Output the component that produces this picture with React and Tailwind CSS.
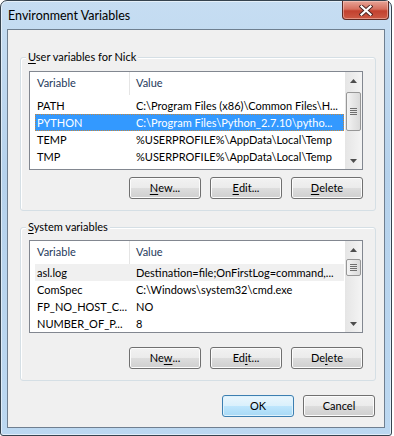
import React from 'react';

const userVars = [
  { name: 'PATH', value: 'C:\\Program Files (x86)\\Common Files\\H...' },
  { name: 'PYTHON', value: 'C:\\Program Files\\Python_2.7.10\\pytho...', selected: true },
  { name: 'TEMP', value: '%USERPROFILE%\\AppData\\Local\\Temp' },
  { name: 'TMP', value: '%USERPROFILE%\\AppData\\Local\\Temp' },
];

const systemVars = [
  { name: 'asl.log', value: 'Destination=file;OnFirstLog=command,...', inactive: true },
  { name: 'ComSpec', value: 'C:\\Windows\\system32\\cmd.exe' },
  { name: 'FP_NO_HOST_C...', value: 'NO' },
  { name: 'NUMBER_OF_P...', value: '8' },
];

const UpArrow = () => (
  <svg width="7" height="4" viewBox="0 0 7 4">
    <polygon points="0,4 3.5,0 7,4" fill="#4d4d4d" />
  </svg>
);

const DownArrow = () => (
  <svg width="7" height="4" viewBox="0 0 7 4">
    <polygon points="0,0 7,0 3.5,4" fill="#4d4d4d" />
  </svg>
);

const ScrollBar = ({ thumbClass }) => (
  <div className="flex w-[17px] flex-col bg-[linear-gradient(to_right,#e5e5e5,#f4f4f4)]">
    <div className="flex h-[17px] items-center justify-center">
      <UpArrow />
    </div>
    <div className="flex-1">
      <div className={thumbClass}>
        <div className="flex flex-col gap-[1px]">
          <div className="h-[1px] w-[7px] bg-[#6f6f6f]" />
          <div className="h-[1px] w-[7px] bg-[#6f6f6f]" />
          <div className="h-[1px] w-[7px] bg-[#6f6f6f]" />
          <div className="h-[1px] w-[7px] bg-[#6f6f6f]" />
        </div>
      </div>
    </div>
    <div className="flex h-[17px] items-center justify-center">
      <DownArrow />
    </div>
  </div>
);

const Row = ({ item }) => {
  let cls = 'ml-[5px] flex h-[17px] w-[309px] items-center whitespace-nowrap leading-[17px] text-black';
  if (item.selected) cls = 'ml-[5px] flex h-[17px] w-[309px] items-center whitespace-nowrap leading-[17px] bg-[#3399ff] text-white outline outline-1 outline-dotted outline-offset-[-1px] outline-[#c8873a]';
  if (item.inactive) cls = 'ml-[5px] flex h-[17px] w-[309px] items-center whitespace-nowrap leading-[17px] bg-[#f0f0f0] text-black';
  return (
    <div className={cls}>
      <div className="w-[99px] overflow-hidden pl-[2px]">{item.name}</div>
      <div className="flex-1 overflow-hidden pl-[2px]">{item.value}</div>
    </div>
  );
};

const ListView = ({ rows, heightClass, rowsClass, thumbClass }) => (
  <div className={heightClass}>
    <div className="flex min-w-0 flex-1 flex-col overflow-hidden bg-white">
      <div className="flex h-[23px] shrink-0 items-center text-[#1e395b]">
        <div className="flex h-full w-[100px] items-center border-r border-[#e5e5e5] pl-[7px]">Variable</div>
        <div className="pl-[6px]">Value</div>
      </div>
      <div className={rowsClass}>
        {rows.map((r) => (
          <Row key={r.name} item={r} />
        ))}
      </div>
    </div>
    <ScrollBar thumbClass={thumbClass} />
  </div>
);

const Btn = ({ children, primary }) => (
  <button
    type="button"
    className={
      primary
        ? 'flex h-[22px] w-[72px] items-center justify-center rounded-[3px] border border-[#3c7fb1] bg-[linear-gradient(to_bottom,#eaf6fd_0%,#d9f0fc_50%,#bee6fd_50%,#a7d9f5_100%)] text-black shadow-[inset_0_0_0_1px_#dff2fc]'
        : 'flex h-[22px] w-[72px] items-center justify-center rounded-[3px] border border-[#707070] bg-[linear-gradient(to_bottom,#f2f2f2_0%,#ebebeb_50%,#dddddd_50%,#cfcfcf_100%)] text-black shadow-[inset_0_0_0_1px_#fcfcfc]'
    }
  >
    {children}
  </button>
);

const U = ({ children }) => <span className="underline underline-offset-[2px]">{children}</span>;

const GroupBox = ({ label, children, className }) => (
  <div className={className}>
    <div className="absolute left-[5px] top-[-8px] bg-[#f0f0f0] px-[2px] leading-[14px] text-black">{label}</div>
    {children}
  </div>
);

export default function App() {
  return (
    <div className="h-[436px] w-[394px] bg-white font-['Lato',sans-serif] text-[11px]">
      <div className="flex h-[436px] w-[392px] flex-col rounded-t-[7px] rounded-b-[3px] border border-[#36434f] bg-[linear-gradient(to_bottom,#c6ddf2,#b6d2ec_40%,#bcd8f1)] px-[6px] pb-[7px] shadow-[inset_0_0_0_1px_rgba(255,255,255,0.55)]">
        {/* title bar */}
        <div className="flex h-[28px] shrink-0 items-start">
          <div className="pl-[1px] pt-[7px] text-[12.5px] leading-[15px] text-black">Environment Variables</div>
          <div className="-mr-[4px] ml-auto flex h-[19px] w-[47px] items-center justify-center rounded-b-[4px] border border-t-0 border-[#5d2a24] bg-[linear-gradient(to_bottom,#e7a497_0%,#d6705f_45%,#c2412f_55%,#cc5a45_100%)] shadow-[inset_0_0_0_1px_rgba(255,220,210,0.45)]">
            <svg width="14" height="11" viewBox="0 0 14 11">
              <path d="M2.5 1.5 L11.5 9.5 M11.5 1.5 L2.5 9.5" stroke="#4a2320" strokeWidth="4" strokeLinecap="square" />
              <path d="M2.5 1.5 L11.5 9.5 M11.5 1.5 L2.5 9.5" stroke="#ffffff" strokeWidth="2.2" strokeLinecap="square" />
            </svg>
          </div>
        </div>

        {/* client area */}
        <div className="flex flex-1 flex-col border border-[#6f7f90] bg-[#f0f0f0] pl-[12px] pr-[8px] pt-[27px]">
          <GroupBox
            className="relative flex h-[154px] flex-col rounded-[3px] border border-[#d5dfe5] pl-[8px] pr-[12px] pt-[13px] shadow-[inset_1px_1px_0_#ffffff]"
            label={<><U>U</U>ser variables for Nick</>}
          >
            <ListView
              rows={userVars}
              heightClass="flex h-[99px] border border-[#828790]"
              rowsClass="flex flex-col pt-[2px]"
              thumbClass="mx-[1px] mt-[3px] flex h-[39px] items-center justify-center rounded-[2px] border border-[#979797] bg-[linear-gradient(to_right,#f4f4f4,#e6e6e6_50%,#dadada)]"
            />
            <div className="mt-[7px] flex justify-end gap-[9px]">
              <Btn><U>N</U>ew...</Btn>
              <Btn><U>E</U>dit...</Btn>
              <Btn><U>D</U>elete</Btn>
            </div>
          </GroupBox>

          <GroupBox
            className="relative mt-[16px] flex h-[154px] flex-col rounded-[3px] border border-[#d5dfe5] pl-[8px] pr-[12px] pt-[12px] shadow-[inset_1px_1px_0_#ffffff]"
            label={<><U>S</U>ystem variables</>}
          >
            <ListView
              rows={systemVars}
              heightClass="flex h-[93px] border border-[#828790]"
              rowsClass="flex flex-col"
              thumbClass="mx-[1px] mt-[1px] flex h-[17px] items-center justify-center rounded-[2px] border border-[#979797] bg-[linear-gradient(to_right,#f4f4f4,#e6e6e6_50%,#dadada)]"
            />
            <div className="mt-[14px] flex justify-end gap-[9px]">
              <Btn>Ne<U>w</U>...</Btn>
              <Btn>Ed<U>i</U>t...</Btn>
              <Btn>De<U>l</U>ete</Btn>
            </div>
          </GroupBox>

          <div className="mt-[14px] flex justify-end gap-[9px] pr-[1px]">
            <Btn primary>OK</Btn>
            <Btn>Cancel</Btn>
          </div>
        </div>
      </div>
    </div>
  );
}
